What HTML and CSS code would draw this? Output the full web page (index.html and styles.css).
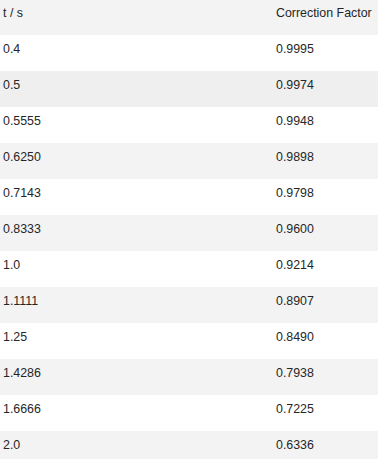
FILE: index.html
```html
<!DOCTYPE html>
<html>
<head>
<meta charset="utf-8">
<link rel="stylesheet" href="styles.css">
</head>
<body>
<div class="table">
  <div class="row head"><div class="c1">t / s</div><div class="c2">Correction Factor</div></div>
  <div class="row"><div class="c1">0.4</div><div class="c2">0.9995</div></div>
  <div class="row alt dark"><div class="c1">0.5</div><div class="c2">0.9974</div></div>
  <div class="row"><div class="c1">0.5555</div><div class="c2">0.9948</div></div>
  <div class="row alt"><div class="c1">0.6250</div><div class="c2">0.9898</div></div>
  <div class="row"><div class="c1">0.7143</div><div class="c2">0.9798</div></div>
  <div class="row alt"><div class="c1">0.8333</div><div class="c2">0.9600</div></div>
  <div class="row"><div class="c1">1.0</div><div class="c2">0.9214</div></div>
  <div class="row alt"><div class="c1">1.1111</div><div class="c2">0.8907</div></div>
  <div class="row"><div class="c1">1.25</div><div class="c2">0.8490</div></div>
  <div class="row alt"><div class="c1">1.4286</div><div class="c2">0.7938</div></div>
  <div class="row"><div class="c1">1.6666</div><div class="c2">0.7225</div></div>
  <div class="row alt"><div class="c1">2.0</div><div class="c2">0.6336</div></div>
</div>
</body>
</html>
```
FILE: styles.css
```css
html, body {
  margin: 0;
  padding: 0;
  background: #ffffff;
}
body {
  font-family: "Liberation Sans", Arial, sans-serif;
  font-size: 12.4px;
  color: #262626;
}
.table {
  display: flex;
  flex-direction: column;
  width: 378px;
}
.row {
  display: grid;
  grid-template-columns: 273px 1fr;
  height: 36px;
  box-sizing: border-box;
  padding-top: 7px;
  line-height: 14px;
}
.row.head {
  height: 35px;
  padding-top: 6px;
  background: #f3f3f3;
}
.row.alt {
  background: #f3f3f3;
}
.row.alt.dark {
  background: #efefef;
}
.c1 {
  padding-left: 3px;
}
.c2 {
  padding-left: 3px;
  white-space: nowrap;
}
```
